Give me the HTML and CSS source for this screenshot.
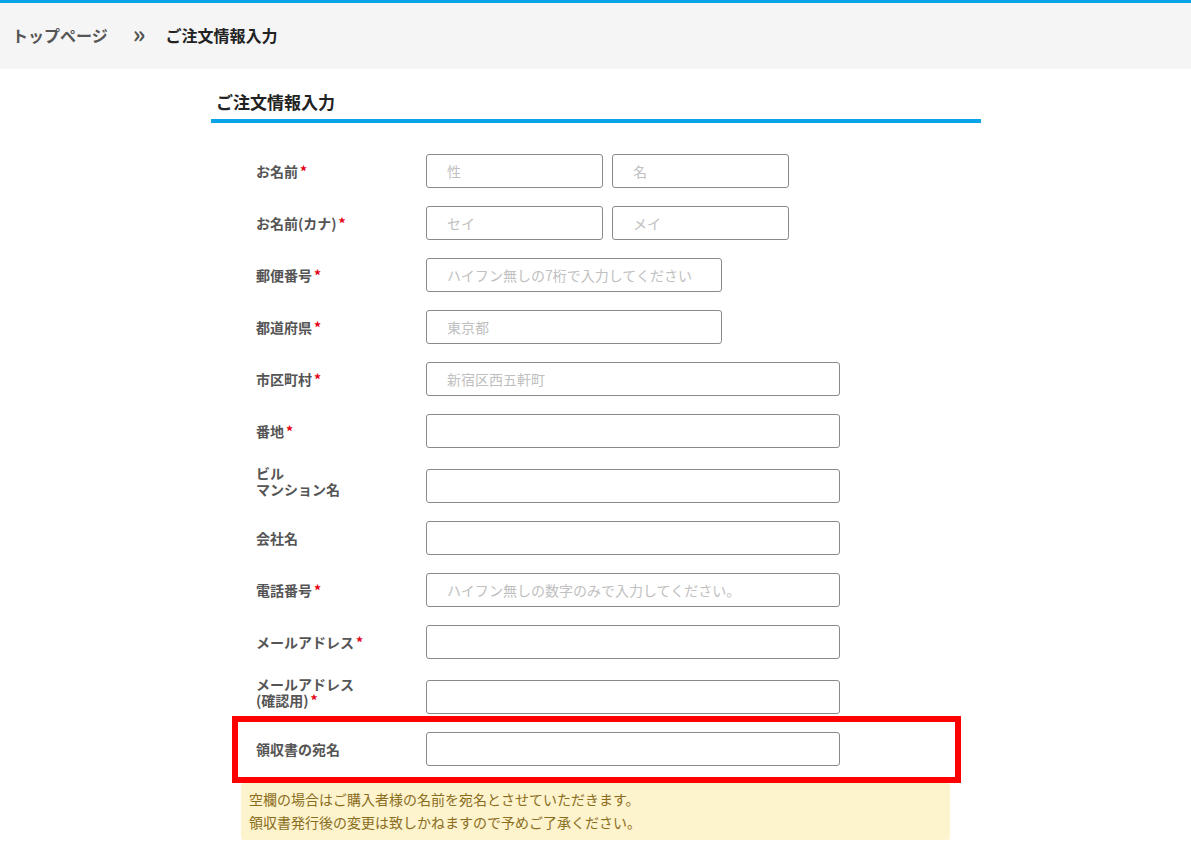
FILE: index.html
```html
<!DOCTYPE html>
<html lang="ja">
<head>
    <meta charset="UTF-8">
    <meta name="viewport" content="width=device-width, initial-scale=1.0">
    <title>ご注文情報入力</title>
    <link rel="stylesheet" href="styles.css">
</head>
<body>

    <div class="breadcrumb">
        <a href="#" class="crumb-link">トップページ</a>
        <span class="crumb-sep">»</span>
        <span class="crumb-current">ご注文情報入力</span>
    </div>

    <div class="order-box">
        <h2>ご注文情報入力</h2>

        <div class="form-row">
            <label>お名前<span class="req">*</span></label>
            <div class="fields">
                <input type="text" class="half" placeholder="性">
                <input type="text" class="half" placeholder="名">
            </div>
        </div>

        <div class="form-row">
            <label>お名前(カナ)<span class="req">*</span></label>
            <div class="fields">
                <input type="text" class="half" placeholder="セイ">
                <input type="text" class="half" placeholder="メイ">
            </div>
        </div>

        <div class="form-row">
            <label>郵便番号<span class="req">*</span></label>
            <div class="fields">
                <input type="text" class="medium" placeholder="ハイフン無しの7桁で入力してください">
            </div>
        </div>

        <div class="form-row">
            <label>都道府県<span class="req">*</span></label>
            <div class="fields">
                <input type="text" class="medium" placeholder="東京都">
            </div>
        </div>

        <div class="form-row">
            <label>市区町村<span class="req">*</span></label>
            <div class="fields">
                <input type="text" class="full" placeholder="新宿区西五軒町">
            </div>
        </div>

        <div class="form-row">
            <label>番地<span class="req">*</span></label>
            <div class="fields">
                <input type="text" class="full">
            </div>
        </div>

        <div class="form-row two-line">
            <label>ビル<br>マンション名</label>
            <div class="fields">
                <input type="text" class="full">
            </div>
        </div>

        <div class="form-row">
            <label>会社名</label>
            <div class="fields">
                <input type="text" class="full">
            </div>
        </div>

        <div class="form-row">
            <label>電話番号<span class="req">*</span></label>
            <div class="fields">
                <input type="text" class="full" placeholder="ハイフン無しの数字のみで入力してください。">
            </div>
        </div>

        <div class="form-row">
            <label>メールアドレス<span class="req">*</span></label>
            <div class="fields">
                <input type="text" class="full">
            </div>
        </div>

        <div class="form-row two-line">
            <label>メールアドレス<br>(確認用)<span class="req">*</span></label>
            <div class="fields">
                <input type="text" class="full">
            </div>
        </div>

        <div class="highlight">
            <div class="form-row">
                <label>領収書の宛名</label>
                <div class="fields">
                    <input type="text" class="full">
                </div>
            </div>
        </div>

        <div class="notice">
            空欄の場合はご購入者様の名前を宛名とさせていただきます。<br>
            領収書発行後の変更は致しかねますので予めご了承ください。
        </div>
    </div>

</body>
</html>
```

FILE: styles.css
```css
body {
    margin: 0;
    padding: 0;
    font-family: "Noto Sans CJK JP", "Noto Sans", sans-serif;
    background-color: #fff;
    color: #333;
    border-top: 3px solid #0aa3e8;
}

.breadcrumb {
    background-color: #f5f5f5;
    height: 66px;
    display: flex;
    align-items: center;
    padding-left: 12px;
    padding-bottom: 3px;
    box-sizing: border-box;
    font-size: 16px;
    font-weight: bold;
}

.crumb-link {
    color: #555;
    text-decoration: none;
}

.crumb-sep {
    color: #555;
    font-size: 24px;
    margin: -5px 20px 0 25px;
}

.crumb-current {
    color: #222;
}

.order-box {
    width: 770px;
    margin-left: 211px;
    padding-bottom: 20px;
}

h2 {
    margin: 0 0 31px;
    padding: 20px 0 4px 5px;
    font-size: 17px;
    line-height: 26px;
    color: #222;
    border-bottom: 4px solid #0aa3e8;
}

.form-row {
    display: flex;
    align-items: center;
    margin-bottom: 18px;
}

.form-row label {
    width: 170px;
    padding-left: 45px;
    font-size: 14px;
    font-weight: bold;
    color: #555;
    line-height: 16px;
}

.form-row.two-line {
    align-items: flex-start;
    padding-top: 3px;
}

.form-row.two-line label {
    line-height: 16px;
    margin-top: -4px;
}

.req {
    color: #e60012;
    margin-left: 2px;
}

.fields {
    display: flex;
    gap: 9px;
}

input[type="text"] {
    box-sizing: border-box;
    height: 34px;
    padding: 0 20px;
    border: 1px solid #8a8a8a;
    border-radius: 3px;
    font-family: inherit;
    font-size: 14px;
    color: #333;
}

input::placeholder {
    color: #c0c0c0;
}

.half {
    width: 177px;
}

.medium {
    width: 296px;
}

.full {
    width: 414px;
}

.highlight {
    margin: -16px 0 0 21px;
    width: 717px;
    border: 6px solid #ff0000;
    padding: 10px 0 11px;
}

.highlight .form-row {
    margin: 0 0 0 -27px;
}

.notice {
    margin-left: 30px;
    width: 693px;
    padding: 5px 8px 6px;
    background-color: #fdf3cd;
    color: #8a6d1c;
    font-size: 14px;
    line-height: 23px;
    border-radius: 3px;
}
```
